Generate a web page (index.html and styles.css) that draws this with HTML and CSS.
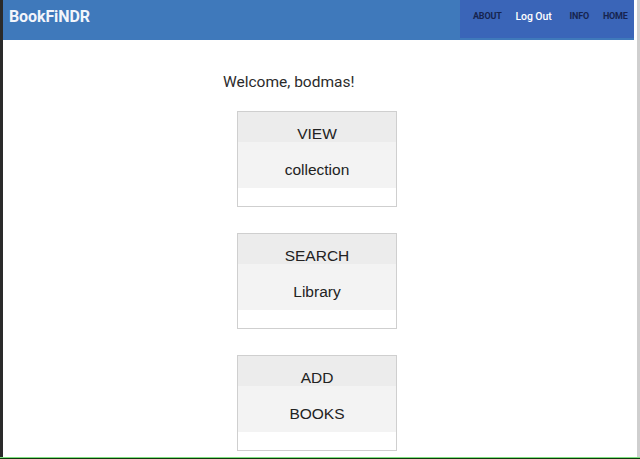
FILE: index.html
```html
<!DOCTYPE html>
<html lang="en">
<head>
<meta charset="utf-8">
<title>BookFiNDR</title>
<link rel="stylesheet" href="styles.css">
</head>
<body>
<div class="frame">
  <div class="edge-left"></div>
  <div class="app">
    <header class="topbar">
      <div class="brand">BookFiNDR</div>
      <nav class="nav">
        <a class="nav-link">ABOUT</a>
        <a class="nav-link logout">Log Out</a>
        <a class="nav-link">INFO</a>
        <a class="nav-link">HOME</a>
      </nav>
    </header>
    <main class="main">
      <div class="column">
        <p class="welcome">Welcome, bodmas!</p>
        <a class="card">
          <div class="card-top">VIEW</div>
          <div class="card-mid">collection</div>
          <div class="card-bottom"></div>
        </a>
        <a class="card">
          <div class="card-top">SEARCH</div>
          <div class="card-mid">Library</div>
          <div class="card-bottom"></div>
        </a>
        <a class="card">
          <div class="card-top">ADD</div>
          <div class="card-mid">BOOKS</div>
          <div class="card-bottom"></div>
        </a>
      </div>
    </main>
  </div>
  <div class="edge-right"><div class="scroll"></div></div>
</div>
<div class="bottom-line"></div>
</body>
</html>
```
FILE: styles.css
```css
* { box-sizing: border-box; }
html, body { margin: 0; padding: 0; }
body {
  width: 640px;
  height: 459px;
  overflow: hidden;
  background: #fff;
  font-family: Roboto, "Liberation Sans", sans-serif;
}
.frame {
  display: flex;
  height: 457px;
}
.edge-left {
  width: 3px;
  background: #2a2a2a;
  flex: none;
}
.edge-right {
  width: 6px;
  flex: none;
  display: flex;
  justify-content: flex-end;
  background: #fff;
}
.scroll {
  width: 3px;
  background: #cfcfcf;
}
.app {
  flex: 1;
  display: flex;
  flex-direction: column;
  overflow: hidden;
}
.topbar {
  height: 40px;
  background: #3f79bb;
  display: flex;
  align-items: flex-start;
  justify-content: space-between;
  flex: none;
}
.brand {
  color: #f2f5fb;
  font-weight: 700;
  font-size: 16px;
  line-height: 20px;
  padding: 7px 0 0 6px;
  letter-spacing: -0.1px;
}
.nav {
  height: 38px;
  width: 174px;
  background: #3a65b8;
  display: flex;
  align-items: flex-start;
  padding: 9px 0 0 13px;
}
.nav-link {
  color: #16244f;
  font-weight: 700;
  font-size: 9px;
  line-height: 14px;
  margin-right: 14px;
  letter-spacing: -0.2px;
}
.nav-link.logout {
  color: #fff;
  font-weight: 500;
  font-size: 10.5px;
  letter-spacing: -0.1px;
  margin-right: 18px;
  line-height: 15px;
}
.nav-link:last-child { margin-right: 0; }
.main {
  flex: 1;
  display: flex;
  justify-content: center;
  padding: 33px 3px 0 0;
}
.column {
  width: 190px;
  display: flex;
  flex-direction: column;
  align-items: center;
}
.welcome {
  align-self: stretch;
  margin: 0 0 19px 1px;
  font-size: 15.5px;
  line-height: 19px;
  color: #2b2b2b;
}
.card {
  width: 160px;
  height: 96px;
  border: 1px solid #cfcfcf;
  margin-bottom: 26px;
  display: flex;
  flex-direction: column;
  font-family: "Liberation Sans", Arial, sans-serif;
  font-size: 15.5px;
  color: #222;
  text-align: center;
}
.card-top {
  height: 30px;
  padding-top: 14px;
  line-height: 15px;
  background: #ececec;
}
.card-mid {
  height: 46px;
  padding-top: 20px;
  line-height: 16px;
  background: #f3f3f3;
}
.card-bottom {
  height: 18px;
  background: #fff;
}
.bottom-line {
  height: 2px;
  background: linear-gradient(#7ee07e 0 1px, #0c3a0c 1px 2px);
}
```
